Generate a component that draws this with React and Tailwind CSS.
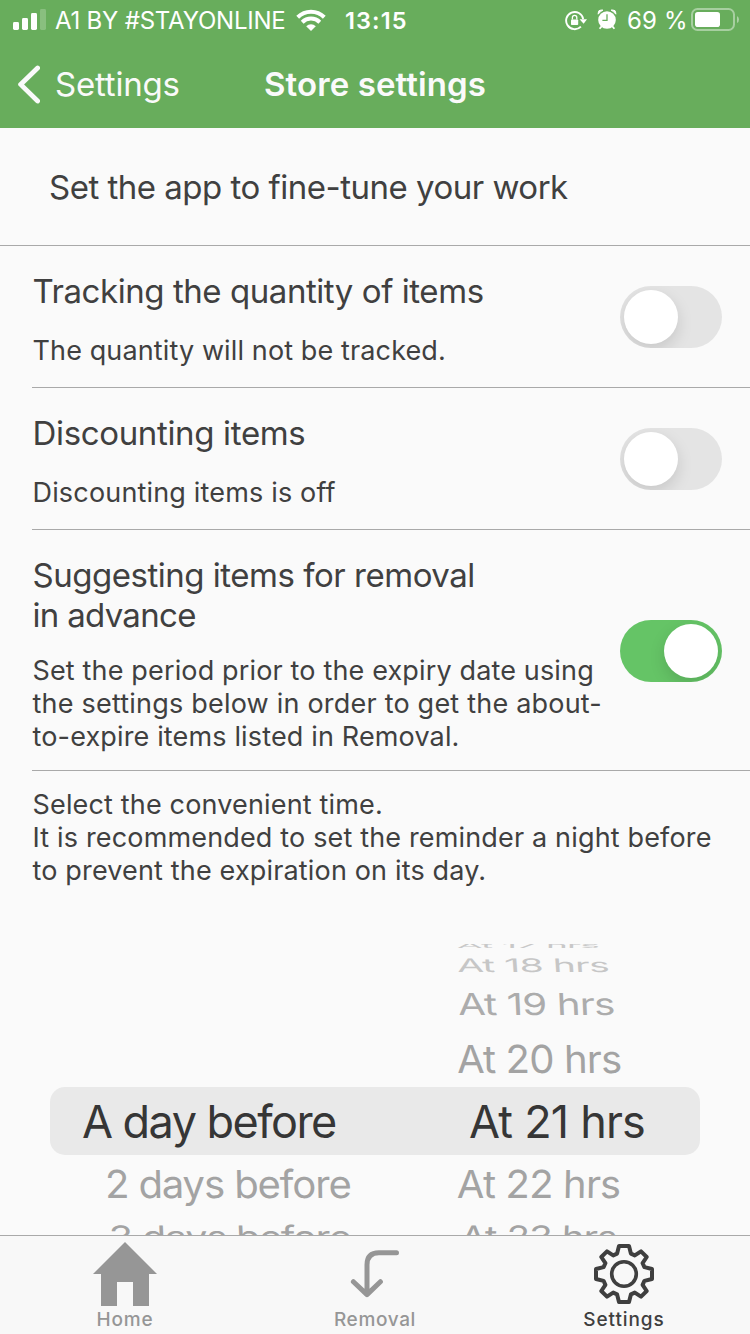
const FONT = "font-['Inter','Liberation_Sans',sans-serif]";

function SignalIcon() {
  return (
    <svg className="ml-[13px] h-10 w-[33px]" viewBox="0 0 33 40" fill="#fff">
      <rect x="0" y="22" width="6" height="8" rx="1.4" />
      <rect x="9" y="18" width="6" height="12" rx="1.4" />
      <rect x="18" y="13" width="6" height="17" rx="1.4" />
      <rect x="27" y="9" width="6" height="21" rx="1.4" opacity="0.22" />
    </svg>
  );
}

function WifiIcon() {
  return (
    <svg className="h-10 w-[30px] shrink-0" viewBox="0 0 30 40" fill="none" stroke="#fff" strokeWidth="4">
      <path d="M1.7 17.2A19 19 0 0 1 28.3 17.2" />
      <path d="M6.2 22.2A12.6 12.6 0 0 1 23.8 22.2" />
      <path d="M15 31L10.2 26.2A7 7 0 0 1 19.8 26.2Z" fill="#fff" stroke="none" />
    </svg>
  );
}

function RotationLockIcon() {
  return (
    <svg className="h-10 w-[22px]" viewBox="0 0 22 40" fill="none" stroke="#fff">
      <path d="M15.9 26.6A8.6 8.6 0 1 1 18.2 19" strokeWidth="1.9" />
      <path d="M14.6 19.2H22L18.6 23.8Z" fill="#fff" stroke="none" />
      <rect x="6" y="19.4" width="7.2" height="5.6" rx="0.8" fill="#fff" stroke="none" />
      <path d="M7.4 19.6V17.6a2.2 2.2 0 0 1 4.4 0V19.6" strokeWidth="1.3" />
    </svg>
  );
}

function AlarmIcon() {
  return (
    <svg className="ml-[10px] h-10 w-[20px]" viewBox="0 0 20 40" fill="none">
      <circle cx="10" cy="20" r="8.8" fill="#fff" />
      <path d="M1.2 14.2A12 12 0 0 1 5.9 10.1L4.4 10A3 3 0 0 0 1.2 13Z M18.8 14.2A12 12 0 0 0 14.1 10.1L15.6 10A3 3 0 0 1 18.8 13Z" fill="#fff" stroke="#fff" strokeWidth="1" />
      <path d="M4.5 26.5L2.6 28.8M15.5 26.5L17.4 28.8" stroke="#fff" strokeWidth="1.8" />
      <path d="M10 14.3V20.4H5.4" stroke="#68ad5c" strokeWidth="1.3" />
    </svg>
  );
}

function BatteryIcon() {
  return (
    <svg className="ml-[5px] h-10 w-[49px] shrink-0" viewBox="0 0 49 40">
      <rect x="1" y="9" width="42" height="21" rx="5.5" fill="none" stroke="#fff" strokeOpacity="0.42" strokeWidth="2" />
      <rect x="4" y="12" width="25" height="15" rx="2.8" fill="#fff" />
      <path d="M46 16Q48 17 48 19.5T46 23Z" fill="#fff" opacity="0.45" />
    </svg>
  );
}

function HomeIcon() {
  return (
    <svg className="size-16" viewBox="0 0 64 64" fill="#969696">
      <path d="M32 0L64 32H56V64H40V40H24V64H8V32H0Z" />
    </svg>
  );
}

function RemovalIcon() {
  return (
    <svg className="size-16" viewBox="0 0 64 64" fill="none" stroke="#969696" strokeWidth="5" strokeLinecap="round" strokeLinejoin="round">
      <path d="M53.5 10.7H36Q24 10.7 24 22.7V52M10.4 39.7L24 52.6L37.4 39.7" />
    </svg>
  );
}

function GearIcon() {
  return (
    <svg className="size-16" viewBox="-31 -32 64 64" fill="none" stroke="#3f3f3f" strokeWidth="4" strokeLinejoin="round">
      <path d="M-5-28L5-28L6.9-20.4L10.8-18.6L17-22.7L22.7-17L18.6-10.8L20.4-6.9L28-5L28 5L20.4 6.9L18.6 10.8L22.7 17L17 22.7L10.8 18.6L6.9 20.4L5 28L-5 28L-6.9 20.4L-10.8 18.6L-17 22.7L-22.7 17L-18.6 10.8L-20.4 6.9L-28 5L-28-5L-20.4-6.9L-18.6-10.8L-22.7-17L-17-22.7L-10.8-18.6L-6.9-20.4Z" />
      <circle r="12.3" strokeWidth="3.6" />
    </svg>
  );
}

function Toggle({ on }) {
  return (
    <button
      className={`mt-px mr-7 flex h-[62px] w-[102px] shrink-0 overflow-hidden rounded-full p-1 ${on ? 'justify-end bg-[#65c466]' : 'justify-start bg-[#e4e4e4]'}`}
      aria-pressed={on}
    >
      <span className="size-[54px] rounded-full bg-white shadow-[0_6px_16px_rgba(0,0,0,0.13)]" />
    </button>
  );
}

function Setting({ children, on, className }) {
  return (
    <section className={`ml-8 flex items-center justify-between border-b border-[#a9a9a9] ${className}`}>
      <div className="self-start pt-[25px] pl-[0.5px] whitespace-nowrap">{children}</div>
      <Toggle on={on} />
    </section>
  );
}

const row = 'flex shrink-0 items-center whitespace-nowrap';
const side = 'origin-left text-[40px] tracking-[-0.85px]';

export default function App() {
  return (
    <div className={`flex h-[1334px] w-[750px] flex-col overflow-hidden bg-[#fafafa] text-[#404040] ${FONT}`}>
      <header className="h-32 shrink-0 bg-[#68ad5c] whitespace-nowrap text-white">
        <div className="flex h-10 items-center text-[24px]">
          <SignalIcon />
          <span className="ml-[9px] w-[241px] pt-0.5 tracking-[-0.22px]">A1 BY #STAYONLINE</span>
          <WifiIcon />
          <span className="ml-[19px] w-[220px] pt-0.5 text-[23.5px] font-semibold tracking-[1.1px]">13:15</span>
          <RotationLockIcon />
          <AlarmIcon />
          <span className="ml-[9px] w-[60px] pt-0.5 pl-px tracking-[0.16px]">69 %</span>
          <BatteryIcon />
        </div>
        <div className="flex h-[88px] items-center text-[33px] text-[#fafafa]">
          <svg className="ml-4 h-10 w-6" viewBox="0 0 24 40" fill="none" stroke="currentColor" strokeWidth="4.8" strokeLinecap="round" strokeLinejoin="round">
            <path d="M21.6 4L4.6 20.4L21.6 37" />
          </svg>
          <span className="ml-[15px] w-[209px] pt-0.5 tracking-[-0.2px]">Settings</span>
          <h1 className="pt-0.5 font-semibold tracking-[0.1px]">Store settings</h1>
        </div>
      </header>

      <main className="flex h-[1107px] shrink-0 flex-col overflow-hidden">
        <div className="flex h-[118px] shrink-0 items-center border-b border-[#a9a9a9] pt-0.5 pl-[49px] text-[33px] tracking-[-0.5px]">
          Set the app to fine-tune your work
        </div>

        <Setting className="h-[142px] shrink-0" on={false}>
          <h2 className="text-[33px] leading-10 tracking-[-0.44px]">Tracking the quantity of items</h2>
          <p className="mt-[23px] text-[27px] leading-[33px] tracking-[0.12px]">The quantity will not be tracked.</p>
        </Setting>
        <Setting className="h-[142px] shrink-0" on={false}>
          <h2 className="text-[33px] leading-10 tracking-[-0.34px]">Discounting items</h2>
          <p className="mt-[23px] text-[27px] leading-[33px] tracking-[0.17px]">Discounting items is off</p>
        </Setting>
        <Setting className="h-[241px] shrink-0" on={true}>
          <h2 className="text-[33px] leading-10 tracking-[-0.48px]">
            Suggesting items for removal<br />
            <span className="tracking-[-0.7px]">in advance</span>
          </h2>
          <p className="mt-[19px] text-[27px] leading-[33px] tracking-[0.15px]">
            Set the period prior to the expiry date using<br />
            <span className="tracking-[0.21px]">the settings below in order to get the about-</span><br />
            to-expire items listed in Removal.
          </p>
        </Setting>
        <p className="ml-8 shrink-0 pt-[17px] pl-[0.5px] text-[27px] leading-[33px] tracking-[0.16px] whitespace-nowrap">
          Select the convenient time.<br />
          It is recommended to set the reminder a night before<br />
          to prevent the expiration on its day.
        </p>

        <div className="relative mt-[53px] flex h-[295px] shrink-0 overflow-hidden text-[#a3a3a3]">
          <div className="absolute top-[147px] left-[50px] h-[68px] w-[650px] rounded-[15px] bg-[#e9e9e9]" />
          <div className="relative w-[457px] pt-[147px]">
            <div className={`${row} h-[68px] pt-0.5 pl-[82px] text-[45px] tracking-[-1.55px] text-[#363636]`}>A day before</div>
            <div className={`${row} h-14 pt-px pl-[105px]`}>
              <span className="origin-left scale-y-[0.965] skew-x-[1deg] text-[40px] tracking-[-1.1px]">2 days before</span>
            </div>
            <div className={`${row} h-[52px] pl-[109px]`}>
              <span className="origin-left scale-x-[0.98] scale-y-[0.77] skew-x-[2deg] text-[40px] tracking-[-1.05px]">3 days before</span>
            </div>
          </div>
          <div className="relative">
            <div className={`${row} mt-1 h-[7px] overflow-hidden text-[#c8c8c8]`}>
              <span className={`${side} -translate-y-[2px] scale-x-[0.925] scale-y-[0.17]`}>At 17 hrs</span>
            </div>
            <div className={`${row} h-7 text-[#c6c6c6]`}>
              <span className={`${side} scale-x-[0.975] scale-y-[0.465] skew-x-[2deg]`}>At 18 hrs</span>
            </div>
            <div className={`${row} h-[50px] pl-px text-[#acacac]`}>
              <span className={`${side} scale-x-[1.005] scale-y-[0.755] skew-x-[2deg]`}>At 19 hrs</span>
            </div>
            <div className={`${row} h-[58px] pt-px`}>
              <span className={`${side} scale-y-[0.965] skew-x-[1deg]`}>At 20 hrs</span>
            </div>
            <div className={`${row} h-[68px] pt-0.5 pl-3 text-[45px] tracking-[-0.8px] text-[#363636]`}>At 21 hrs</div>
            <div className={`${row} h-14 pt-px`}>
              <span className={`${side} scale-y-[0.965] skew-x-[-1deg]`}>At 22 hrs</span>
            </div>
            <div className={`${row} h-[52px] pl-[3px]`}>
              <span className={`${side} scale-x-[0.955] scale-y-[0.77] skew-x-[-2deg]`}>At 23 hrs</span>
            </div>
          </div>
        </div>
      </main>

      <nav className="grid h-[99px] shrink-0 grid-cols-3 border-t border-[#a9a9a9] bg-[#f8f8f8] pt-1.5 text-[19px] leading-7 font-medium text-[#969696]">
        <a className="flex flex-col items-center tracking-[0.8px]"><HomeIcon />Home</a>
        <a className="flex flex-col items-center tracking-[0.65px]"><RemovalIcon />Removal</a>
        <a className="flex flex-col items-center tracking-[0.9px] text-[#3f3f3f]"><GearIcon /><span className="mr-0.5">Settings</span></a>
      </nav>
    </div>
  );
}
